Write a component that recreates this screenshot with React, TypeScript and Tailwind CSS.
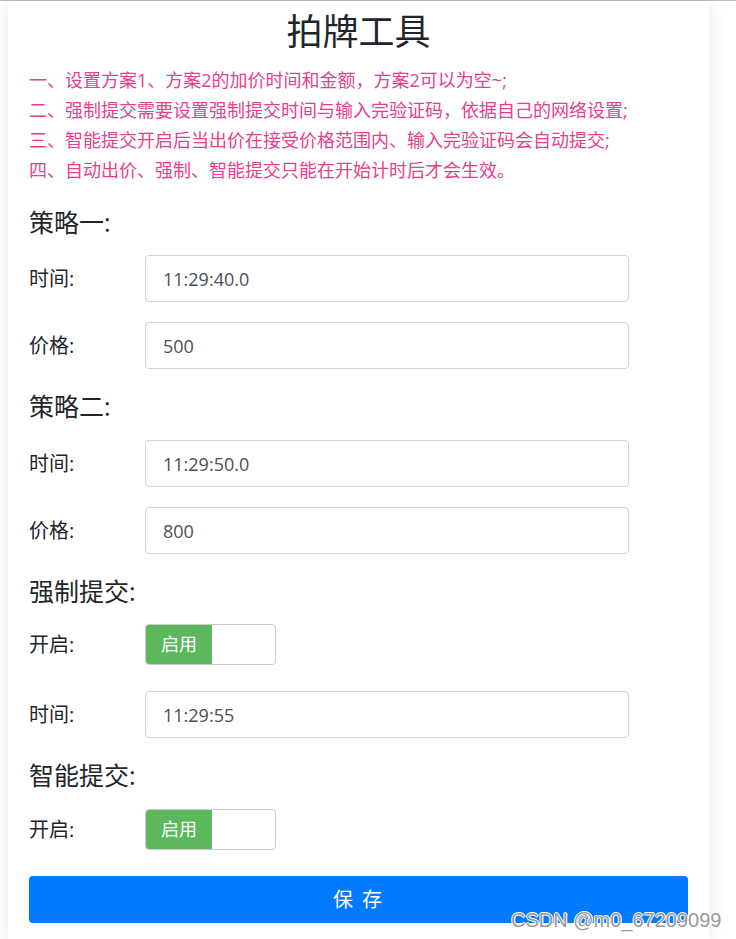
const font = { fontFamily: '"Open Sans", "Noto Sans CJK SC", sans-serif' };

const tips = [
  "一、设置方案1、方案2的加价时间和金额，方案2可以为空~;",
  "二、强制提交需要设置强制提交时间与输入完验证码，依据自己的网络设置;",
  "三、智能提交开启后当出价在接受价格范围内、输入完验证码会自动提交;",
  "四、自动出价、强制、智能提交只能在开始计时后才会生效。",
];

const Heading: React.FC<{ text: string }> = ({ text }) => (
  <div className="mt-[22px] h-[30px] text-[25px] leading-[30px] text-[#212529]">{text}</div>
);

const InputRow: React.FC<{ label: string; value: string; className?: string }> = ({ label, value, className }) => (
  <div className={"flex items-center " + (className ?? "")}>
    <div className="w-[116px] text-[20px] text-[#212529]">{label}</div>
    <input
      readOnly
      value={value}
      className="h-[47px] w-[484px] rounded-[4px] border border-[#ced4da] bg-white px-[17px] text-[18px] text-[#495057] outline-none"
      style={font}
    />
  </div>
);

const ToggleRow: React.FC<{ className?: string }> = ({ className }) => (
  <div className={"flex items-center " + (className ?? "")}>
    <div className="w-[116px] text-[20px] text-[#212529]">开启:</div>
    <div className="flex h-[41px] w-[131px] overflow-hidden rounded-[4px] border border-[#cccccc] bg-white">
      <div className="flex w-[66px] items-center justify-center bg-[#5cb85c] text-[18px] text-white">启用</div>
    </div>
  </div>
);

export default function App() {
  return (
    <div className="relative min-h-[939px] border-t border-[#bdbdbd] bg-white" style={font}>
      <div className="ml-[8px] w-[701px] bg-white px-[21px] pb-[20px] shadow-[0_0_18px_rgba(0,0,0,0.09)]">
        <h1 className="pt-[9px] text-center text-[36px] leading-[44px] text-[#212529]">拍牌工具</h1>
        <div className="mt-[11px] text-[18px] leading-[30px] text-[#e83e8c]">
          {tips.map((t) => (
            <div key={t}>{t}</div>
          ))}
        </div>

        <Heading text="策略一:" />
        <InputRow className="mt-[18px]" label="时间:" value="11:29:40.0" />
        <InputRow className="mt-[20px]" label="价格:" value="500" />

        <Heading text="策略二:" />
        <InputRow className="mt-[19px]" label="时间:" value="11:29:50.0" />
        <InputRow className="mt-[20px]" label="价格:" value="800" />

        <Heading text="强制提交:" />
        <ToggleRow className="mt-[18px]" />
        <InputRow className="mt-[26px]" label="时间:" value="11:29:55" />

        <Heading text="智能提交:" />
        <ToggleRow className="mt-[19px]" />

        <button className="mt-[26px] h-[47px] w-full rounded-[4px] bg-[#007bff] text-[20px] tracking-[2px] text-white">
          保 存
        </button>
      </div>

      <div
        className="absolute left-[511px] top-[904px] text-[20px] text-[#9a9a9a]"
        style={{
          fontFamily: '"Liberation Sans", Arial, sans-serif',
          textShadow: "1px 0 0 #fff, -1px 0 0 #fff, 0 1px 0 #fff, 0 -1px 0 #fff",
        }}
      >
        CSDN @m0_67209099
      </div>
    </div>
  );
}
